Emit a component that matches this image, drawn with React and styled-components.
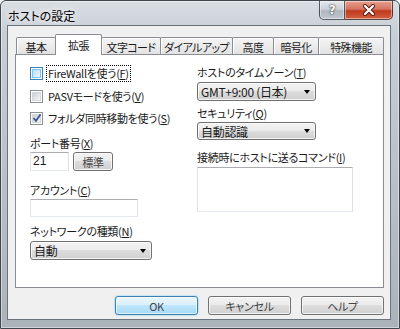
import React from 'react';
import styled, { createGlobalStyle, css } from 'styled-components';

const Global = createGlobalStyle`
  html, body { margin: 0; padding: 0; background: #fff; }
  body {
    width: 400px; height: 329px; overflow: hidden;
    font-family: "Noto Sans CJK JP", "Noto Sans", sans-serif;
    font-size: 11px; color: #1a1a1a;
    letter-spacing: -0.3px;
    font-feature-settings: "palt";
  }
  * { box-sizing: border-box; }
`;

const Window = styled.div`
  width: 400px;
  height: 329px;
  border: 1px solid #3f464e;
  border-radius: 6px 6px 0 0;
  background: linear-gradient(180deg, #d9dee3 0%, #c8ced5 10%, #b7bec6 60%, #aab2ba 100%);
  box-shadow: inset 0 0 0 1px rgba(255, 255, 255, 0.45);
  display: flex;
  flex-direction: column;
`;

const TitleBar = styled.div`
  height: 24px;
  display: flex;
  justify-content: space-between;
  align-items: flex-start;
  padding-left: 7px;
`;

const Title = styled.div`
  margin-top: 6px;
  font-size: 12px;
  line-height: 17px;
  letter-spacing: 0;
  color: #000;
  text-shadow: 0 0 6px #fff, 0 0 10px rgba(255, 255, 255, 0.9);
`;

const Captions = styled.div`
  display: flex;
  margin-right: 6px;
  height: 19px;
`;

const CapButton = styled.div`
  width: ${p => p.$w}px;
  height: 19px;
  display: flex;
  align-items: center;
  justify-content: center;
  border: 1px solid rgba(40, 45, 55, 0.75);
  border-top: none;
  box-shadow: inset 0 0 0 1px rgba(255, 255, 255, 0.45);
  ${p => p.$close ? css`
    background: linear-gradient(180deg, #e6a08e 0%, #d47460 45%, #c2391f 55%, #d0603f 100%);
    border-radius: 0 0 5px 0;
    border-left: none;
  ` : css`
    background: linear-gradient(180deg, #e4e8ec 0%, #cbd1d7 45%, #aeb6bf 55%, #c0c7ce 100%);
    border-radius: 0 0 0 5px;
  `}
`;

const HelpGlyph = styled.span`
  font-family: "DejaVu Sans", sans-serif;
  font-weight: bold;
  font-size: 12px;
  color: #fff;
  text-shadow: 0 0 1px #333, 0 0 2px #333;
`;

const Client = styled.div`
  flex: 1;
  margin: 0 8px 8px 6px;
  border: 1px solid #6b737c;
  background: #f0f0f0;
  display: flex;
  flex-direction: column;
  padding: 8px 6px 0 7px;
`;

const TabStrip = styled.div`
  height: 21px;
  display: flex;
  align-items: flex-end;
  padding-left: 1px;
  margin-bottom: -1px;
  position: relative;
  z-index: 1;
`;

const Tab = styled.div`
  width: ${p => p.$w}px;
  margin-left: ${p => (p.$first ? 0 : -1)}px;
  border: 1px solid #898c95;
  border-bottom: none;
  border-radius: 2px 2px 0 0;
  display: flex;
  align-items: center;
  justify-content: center;
  white-space: nowrap;
  overflow: hidden;
  font-size: 11px;
  letter-spacing: -0.6px;
  ${p => p.$active ? css`
    height: 21px;
    background: #fff;
    position: relative;
    z-index: 2;
    padding-bottom: 1px;
  ` : css`
    height: 17px;
    margin-bottom: 1px;
    padding-top: 1px;
    background: linear-gradient(180deg, #f4f4f4 0%, #ececec 50%, #e2e2e2 100%);
    box-shadow: inset 1px 1px 0 #fff;
  `}
`;

const Panel = styled.div`
  height: 234px;
  border: 1px solid #898c95;
  background: #fff;
  display: grid;
  grid-template-columns: 167px 1fr;
  padding: 10px 0 0 14px;
`;

const Column = styled.div`
  display: flex;
  flex-direction: column;
  align-items: flex-start;
`;

const CheckRow = styled.div`
  height: 17px;
  margin-top: ${p => p.$mt || 0}px;
  display: flex;
  align-items: center;
  gap: 3px;
`;

const Box = styled.div`
  width: 13px;
  height: 13px;
  border: 1px solid ${p => (p.$hot ? '#3c7fb1' : '#8e8f8f')};
  background: #fff;
  padding: 1px;
  display: flex;
  & > div {
    flex: 1;
    background: ${p => p.$hot
      ? 'linear-gradient(135deg, #b9e2fb 0%, #e9f7fe 100%)'
      : 'linear-gradient(135deg, #cbcfd5 0%, #f6f6f6 100%)'};
    border: 1px solid ${p => (p.$hot ? '#79c6f9' : '#d4d6da')};
    position: relative;
  }
  svg { position: absolute; left: -2px; top: -3px; }
`;

const CheckLabel = styled.span`
  line-height: 15px;
  padding: 0 1px;
  border: 1px dotted ${p => (p.$focus ? '#000' : 'transparent')};
  white-space: nowrap;
`;

const Label = styled.div`
  height: 15px;
  line-height: 15px;
  margin-top: ${p => p.$mt || 0}px;
  white-space: nowrap;
`;

const Row = styled.div`
  display: flex;
  gap: 4px;
  margin-top: ${p => p.$mt || 0}px;
`;

const Input = styled.div`
  width: ${p => p.$w}px;
  height: ${p => p.$h || 18}px;
  margin-top: ${p => p.$mt || 0}px;
  border: 1px solid;
  border-color: #abadb3 #dbdfe6 #e3e9ef #e2e3ea;
  border-radius: 1px;
  background: #fff;
  padding-left: 2px;
  line-height: 17px;
  font-family: "Liberation Sans", sans-serif;
  font-size: 12px;
  letter-spacing: 0;
`;

const winButton = css`
  border: 1px solid #707070;
  border-radius: 3px;
  background: linear-gradient(180deg, #f2f2f2 0%, #ebebeb 49%, #dddddd 50%, #cfcfcf 100%);
  box-shadow: inset 0 0 0 1px rgba(255, 255, 255, 0.75);
`;

const Select = styled.div`
  ${winButton};
  width: ${p => p.$w}px;
  height: ${p => p.$h || 19}px;
  margin-top: ${p => p.$mt || 0}px;
  display: flex;
  align-items: center;
  justify-content: space-between;
  padding: 0 5px 0 3px;
  font-size: 12px;
  white-space: nowrap;
`;

const Arrow = styled.span`
  width: 0;
  height: 0;
  border-left: 3.5px solid transparent;
  border-right: 3.5px solid transparent;
  border-top: 4px solid #000;
`;

const Button = styled.div`
  ${winButton};
  width: ${p => p.$w}px;
  height: 19px;
  display: flex;
  align-items: center;
  justify-content: center;
  color: #444;
  ${p => p.$default && css`
    border-color: #3c7fb1;
    background: linear-gradient(180deg, #eaf6fd 0%, #d9f0fc 49%, #bee6fd 50%, #a7d9f5 100%);
    box-shadow: inset 0 0 0 1px rgba(255, 255, 255, 0.6), 0 0 2px #5ec1f1;
  `}
`;

const Footer = styled.div`
  display: flex;
  justify-content: flex-end;
  gap: 10px;
  margin-top: 8px;
`;

const TextArea = styled(Input)`
  height: 45px;
`;

const K = ({ c }) => <>(<u>{c}</u>)</>;

function Check({ label, hot, checked, focus, mt }) {
  return (
    <CheckRow $mt={mt}>
      <Box $hot={hot}>
        <div>
          {checked && (
            <svg width="12" height="12" viewBox="0 0 12 12">
              <path d="M2.5 6.2 L5 8.8 L9.6 2.2" stroke="#3d5592" strokeWidth="1.8" fill="none" />
            </svg>
          )}
        </div>
      </Box>
      <CheckLabel $focus={focus}>{label}</CheckLabel>
    </CheckRow>
  );
}

const tabs = [
  ['基本', 40], ['拡張', 47], ['文字コード', 60], ['ダイアルアップ', 73],
  ['高度', 42], ['暗号化', 46], ['特殊機能', 66],
];

export default function App() {
  return (
    <>
      <Global />
      <Window>
        <TitleBar>
          <Title>ホストの設定</Title>
          <Captions>
            <CapButton $w={26}><HelpGlyph>?</HelpGlyph></CapButton>
            <CapButton $w={48} $close>
              <svg width="14" height="12" viewBox="0 0 14 12">
                <path d="M3 2 L11 10 M11 2 L3 10" stroke="#5a1a10" strokeWidth="4" strokeLinecap="round" />
                <path d="M3 2 L11 10 M11 2 L3 10" stroke="#fff" strokeWidth="2.2" strokeLinecap="round" />
              </svg>
            </CapButton>
          </Captions>
        </TitleBar>
        <Client>
          <TabStrip>
            {tabs.map(([t, w], i) => (
              <Tab key={t} $w={w} $first={i === 0} $active={i === 1}>{t}</Tab>
            ))}
          </TabStrip>
          <Panel>
            <Column>
              <Check hot focus label={<>FireWallを使う<K c="F" /></>} />
              <Check mt={6} label={<>PASVモードを使う<K c="V" /></>} />
              <Check mt={5} checked label={<>フォルダ同時移動を使う<K c="S" /></>} />
              <Label $mt={9}>ポート番号<K c="X" /></Label>
              <Row $mt={1}>
                <Input $w={39} $h={19}>21</Input>
                <Button $w={40}>標準</Button>
              </Row>
              <Label $mt={12}>アカウント<K c="C" /></Label>
              <Input $w={108} $mt={1} />
              <Label $mt={7}>ネットワークの種類<K c="N" /></Label>
              <Select $w={122} $mt={2}>自動<Arrow /></Select>
            </Column>
            <Column>
              <Label>ホストのタイムゾーン<K c="T" /></Label>
              <Select $w={119} $mt={2}>GMT+9:00 (日本)<Arrow /></Select>
              <Label $mt={5}>セキュリティ<K c="Q" /></Label>
              <Select $w={119} $mt={1} $h={18}>自動認識<Arrow /></Select>
              <Label $mt={10}>接続時にホストに送るコマンド<K c="I" /></Label>
              <TextArea $w={156} $mt={2} />
            </Column>
          </Panel>
          <Footer>
            <Button $w={83} $default>OK</Button>
            <Button $w={83}>キャンセル</Button>
            <Button $w={83}>ヘルプ</Button>
          </Footer>
        </Client>
      </Window>
    </>
  );
}
